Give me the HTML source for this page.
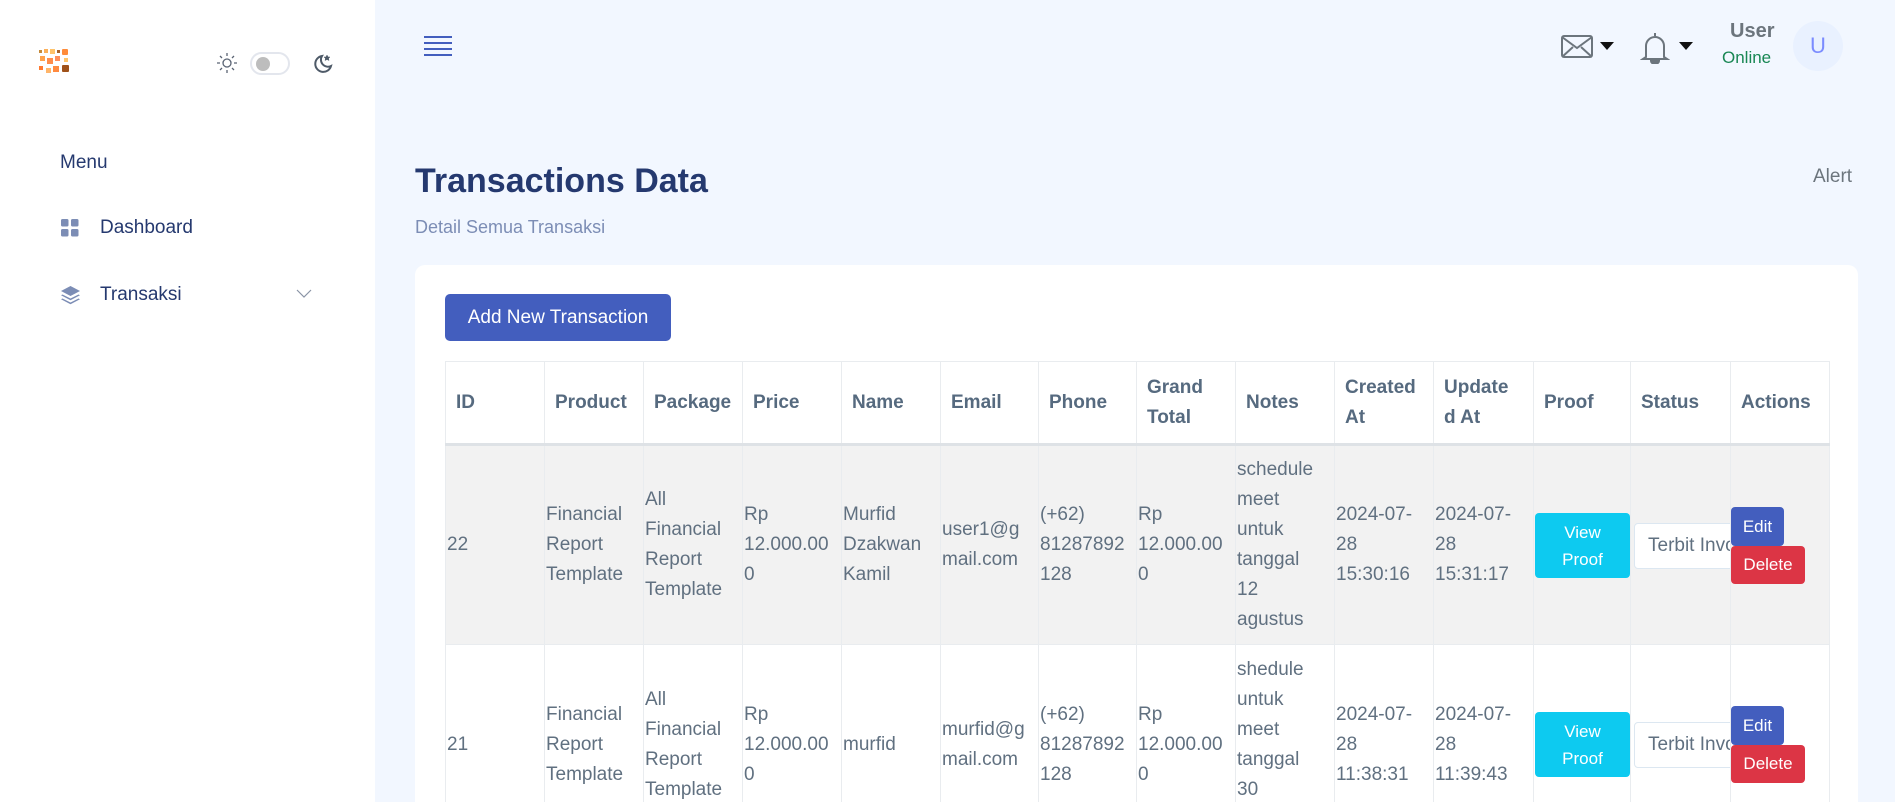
<!DOCTYPE html>
<html style="width:1895px;height:802px;overflow:hidden"><head><meta charset="utf-8">
<style>
*{box-sizing:border-box;margin:0;padding:0}
body{width:1895px;height:802px;overflow:hidden;background:#f2f7ff;font-family:"Liberation Sans",sans-serif;position:relative;color:#607080}
.side{position:absolute;left:0;top:0;width:375px;height:802px;background:#fff}
.abs{position:absolute}
.nav{color:#25396f;font-size:19px}
table{position:absolute;left:445px;top:361px;border-collapse:collapse;table-layout:fixed;width:1384px}
td,th{border:1px solid #e9ecef;font-size:19px;line-height:30px;vertical-align:middle;white-space:nowrap;overflow:hidden;text-align:left}
th{height:83px;padding:0 10px;color:#566a7f;font-weight:bold;border-bottom:3px solid #dee2e6}
td{height:200px;padding:0 1px;color:#607080;position:relative}
tr.s td{background:#f2f2f2}
.btn{position:absolute;color:#fff;font-size:17px;border-radius:4px;text-align:center}
</style></head><body>
<div class="side">
  <svg class="abs" style="left:38px;top:48px" width="34" height="28" viewBox="0 0 34 28">
    <rect x="1" y="2" width="3" height="3" fill="#c58a3a"/><rect x="6" y="1" width="4" height="4" fill="#fbb05a"/><rect x="12" y="1" width="5" height="5" fill="#ffc36b"/><rect x="19" y="2" width="3" height="3" fill="#a8622a"/><rect x="24" y="1" width="6" height="6" rx="1" fill="#ff8c3a"/>
    <rect x="2" y="8" width="5" height="5" fill="#ffa24c"/><rect x="9" y="10" width="6" height="6" fill="#ff8c4a"/><rect x="17" y="8" width="5" height="5" fill="#ff8d5a"/><rect x="26" y="10" width="4" height="4" fill="#ffc56a"/>
    <rect x="1" y="18" width="4" height="4" fill="#ff7a30"/><rect x="8" y="20" width="5" height="5" fill="#ffb56a"/><rect x="15" y="18" width="6" height="6" fill="#ff8a40"/><rect x="24" y="17" width="7" height="7" rx="1" fill="#a0521a"/>
  </svg>
  <svg class="abs" style="left:216px;top:52px" width="22" height="22" viewBox="0 0 22 22" fill="none" stroke="#5a6474" stroke-width="1.3"><circle cx="11" cy="11" r="4"/><path d="M11 1v3M11 18v3M1 11h3M18 11h3M4 4l2 2M16 16l2 2M4 18l2-2M16 6l2-2"/></svg>
  <div class="abs" style="left:250px;top:52px;width:40px;height:23px;border:2px solid #e3e6ed;border-radius:12px;background:#fff"><div style="position:absolute;left:4px;top:3px;width:14px;height:14px;border-radius:50%;background:#bdbdbd"></div></div>
  <svg class="abs" style="left:310px;top:52px" width="24" height="24" viewBox="0 0 24 24" fill="none" stroke="#4e5a68" stroke-width="2"><path d="M12 4a8 8 0 1 0 9 10a7 7 0 0 1-9-10z"/><path d="M17 3l1 2 2 0-1.5 1.5.5 2-2-1-2 1 .5-2L14 5h2z" fill="#4e5a68" stroke-width="0.5"/></svg>
  <div class="abs nav" style="left:60px;top:152px">Menu</div>
  <svg class="abs" style="left:61px;top:219px" width="18" height="18"><rect x="0" y="0" width="7.5" height="7.5" rx="1.5" fill="#7c8db5"/><rect x="10" y="0" width="7.5" height="7.5" rx="1.5" fill="#7c8db5"/><rect x="0" y="10" width="7.5" height="7.5" rx="1.5" fill="#7c8db5"/><rect x="10" y="10" width="7.5" height="7.5" rx="1.5" fill="#7c8db5"/></svg>
  <div class="abs nav" style="left:100px;top:217px">Dashboard</div>
  <svg class="abs" style="left:60px;top:285px" width="21" height="20" viewBox="0 0 21 20"><path d="M10.5 1L20 6l-9.5 5L1 6z" fill="#7c8db5"/><path d="M2.5 9.5l8 4 8-4 1.5.8-9.5 5-9.5-5z" fill="#7c8db5"/><path d="M2.5 13.5l8 4 8-4 1.5.8-9.5 5-9.5-5z" fill="#7c8db5"/></svg>
  <div class="abs nav" style="left:100px;top:284px">Transaksi</div>
  <svg class="abs" style="left:296px;top:289px" width="16" height="10"><path d="M1 1l7 7 7-7" fill="none" stroke="#8a94a6" stroke-width="1.2"/></svg>
</div>
<svg class="abs" style="left:424px;top:35px" width="28" height="22"><path d="M0 2h28M0 8h28M0 14h28M0 20h28" stroke="#435ebe" stroke-width="2"/></svg>
<svg class="abs" style="left:1561px;top:35px" width="32" height="24" viewBox="0 0 32 24" fill="none" stroke="#6c757d" stroke-width="2"><rect x="1" y="1" width="30" height="21" rx="2"/><path d="M1 2l15 11 15-11M1 22l11-10M31 22l-11-10"/></svg>
<svg class="abs" style="left:1600px;top:42px" width="14" height="8"><path d="M0 0h14L7 8z" fill="#111"/></svg>
<svg class="abs" style="left:1640px;top:31px" width="30" height="33" viewBox="0 0 30 33" fill="none" stroke="#6c757d" stroke-width="2"><path d="M15 2v3M6 26V15a9 9 0 0 1 18 0v11l3 2H3z"/><path d="M11 30a4 3 0 0 0 8 0z" fill="#6c757d"/></svg>
<svg class="abs" style="left:1679px;top:42px" width="14" height="8"><path d="M0 0h14L7 8z" fill="#111"/></svg>
<div class="abs" style="left:1730px;top:20px;font-size:20px;font-weight:bold;color:#6c757d">User</div>
<div class="abs" style="left:1722px;top:48px;font-size:17px;color:#198754">Online</div>
<div class="abs" style="left:1793px;top:21px;width:50px;height:50px;border-radius:50%;background:#e9f1ff;color:#7b8cff;font-size:22px;text-align:center;line-height:50px">U</div>
<div class="abs" style="left:415px;top:162px;font-size:34px;font-weight:bold;color:#25396f">Transactions Data</div>
<div class="abs" style="left:415px;top:217px;font-size:18px;color:#7c8db5">Detail Semua Transaksi</div>
<div class="abs" style="left:1813px;top:166px;font-size:19px;color:#6c757d">Alert</div>
<div class="abs" style="left:415px;top:265px;width:1443px;height:537px;background:#fff;border-radius:10px 10px 0 0"></div>
<div class="abs" style="left:445px;top:294px;width:226px;height:47px;background:#435ebe;border-radius:5px;color:#fff;font-size:19px;text-align:center;line-height:47px">Add New Transaction</div>
<div class="abs" style="left:0;top:0;width:1895px;height:802px;overflow:hidden">
<table>
<colgroup><col style="width:99px"><col style="width:99px"><col style="width:99px"><col style="width:99px"><col style="width:99px"><col style="width:98px"><col style="width:98px"><col style="width:99px"><col style="width:99px"><col style="width:99px"><col style="width:100px"><col style="width:97px"><col style="width:100px"><col style="width:99px"></colgroup>
<tr><th>ID</th><th>Product</th><th>Package</th><th>Price</th><th>Name</th><th>Email</th><th>Phone</th><th>Grand<br>Total</th><th>Notes</th><th>Created<br>At</th><th>Update<br>d At</th><th>Proof</th><th>Status</th><th>Actions</th></tr>
<tr class="s"><td>22</td><td>Financial<br>Report<br>Template</td><td>All<br>Financial<br>Report<br>Template</td><td>Rp<br>12.000.00<br>0</td><td>Murfid<br>Dzakwan<br>Kamil</td><td>user1@g<br>mail.com</td><td>(+62)<br>81287892<br>128</td><td>Rp<br>12.000.00<br>0</td><td>schedule<br>meet<br>untuk<br>tanggal<br>12<br>agustus</td><td>2024-07-<br>28<br>15:30:16</td><td>2024-07-<br>28<br>15:31:17</td>
<td><div class="btn" style="left:1px;top:67px;width:95px;height:65px;background:#0dcaf0;line-height:27px;padding-top:6px">View<br>Proof</div></td>
<td><div class="abs" style="left:3px;top:77px;width:110px;height:46px;background:#fff;border:1px solid #dce7f1;border-radius:4px;padding-left:13px;line-height:44px">Terbit Invoice</div></td>
<td><div class="btn" style="left:0;top:61px;width:53px;height:39px;background:#435ebe;line-height:39px">Edit</div><div class="btn" style="left:0;top:100px;width:74px;height:38px;background:#dc3545;line-height:38px">Delete</div></td></tr>
<tr><td>21</td><td>Financial<br>Report<br>Template</td><td>All<br>Financial<br>Report<br>Template</td><td>Rp<br>12.000.00<br>0</td><td>murfid</td><td>murfid@g<br>mail.com</td><td>(+62)<br>81287892<br>128</td><td>Rp<br>12.000.00<br>0</td><td>shedule<br>untuk<br>meet<br>tanggal<br>30<br>juli</td><td>2024-07-<br>28<br>11:38:31</td><td>2024-07-<br>28<br>11:39:43</td>
<td><div class="btn" style="left:1px;top:67px;width:95px;height:65px;background:#0dcaf0;line-height:27px;padding-top:6px">View<br>Proof</div></td>
<td><div class="abs" style="left:3px;top:77px;width:110px;height:46px;background:#fff;border:1px solid #dce7f1;border-radius:4px;padding-left:13px;line-height:44px">Terbit Invoice</div></td>
<td><div class="btn" style="left:0;top:61px;width:53px;height:39px;background:#435ebe;line-height:39px">Edit</div><div class="btn" style="left:0;top:100px;width:74px;height:38px;background:#dc3545;line-height:38px">Delete</div></td></tr>
</table>
</div>
</body></html>
